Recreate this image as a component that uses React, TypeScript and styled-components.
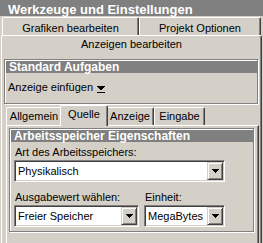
import styled, { createGlobalStyle } from 'styled-components'

const GlobalStyle = createGlobalStyle`
  html, body {
    margin: 0;
    padding: 0;
    background: #d4d0c8;
  }
  body {
    font-family: 'Liberation Sans', Arial, sans-serif;
    font-size: 11px;
    color: #000;
  }
  * {
    box-sizing: border-box;
  }
`

const Window = styled.div`
  width: 263px;
  height: 243px;
  overflow: hidden;
  background: #d4d0c8;
  display: flex;
  flex-direction: column;
`

const TitleBar = styled.div`
  height: 16px;
  margin-bottom: 1px;
  padding: 2px 0 0 8px;
  background: #808080;
  color: #fff;
  font-size: 13px;
  font-weight: bold;
  line-height: 15px;
  white-space: nowrap;
`

const TabRow = styled.div`
  display: flex;
  align-items: flex-end;
`

const Tab = styled.div<{ $width: number; $active?: boolean }>`
  position: relative;
  z-index: ${(p) => (p.$active ? 1 : 0)};
  width: ${(p) => p.$width}px;
  height: ${(p) => (p.$active ? 21 : 18)}px;
  margin: 0 ${(p) => (p.$active ? -2 : 0)}px ${(p) => (p.$active ? -1 : 0)}px;
  padding-top: 2px;
  background: #d4d0c8;
  border-top: 1px solid #fff;
  border-left: 1px solid #fff;
  border-right: 1px solid #404040;
  border-radius: 2px 2px 0 0;
  box-shadow: inset -1px 0 #808080;
  text-align: center;
  line-height: 13px;
  white-space: nowrap;
`

const BackTab = styled(Tab)`
  padding-top: 4px;
`

const BackRow = styled(TabRow)`
  padding-left: 2px;
`

const Sheet = styled.div`
  flex: 1;
  width: 261px;
  margin-left: 1px;
  display: flex;
  flex-direction: column;
  border-top: 1px solid #fff;
  border-left: 1px solid #fff;
  border-right: 1px solid #404040;
  border-radius: 2px 2px 0 0;
  box-shadow: inset -1px 0 #808080;
`

const SheetTitle = styled.div`
  height: 16px;
  padding-top: 2px;
  text-align: center;
  line-height: 13px;
`

const SheetBody = styled.div`
  flex: 1;
  display: flex;
  flex-direction: column;
  padding: 7px 0 0 2px;
`

const GroupBox = styled.div<{ $right: number }>`
  margin-right: ${(p) => p.$right}px;
  padding: 1px 0 0 1px;
  border: 1px solid #808080;
  box-shadow: inset 1px 1px #fff, 1px 1px #fff;
`

const GroupHeader = styled.div`
  height: 12px;
  padding-left: 3px;
  background: #808080;
  color: #fff;
  font-size: 12px;
  font-weight: bold;
  line-height: 12px;
  white-space: nowrap;
`

const MenuRow = styled.div`
  height: 30px;
  padding: 8px 0 0 2px;
  display: flex;
  align-items: flex-start;
  line-height: 13px;
`

const DropMark = styled.svg`
  margin: 5px 0 0 4px;
`

const TabControl = styled.div`
  flex: 1;
  margin: 1px 2px 0 2px;
  display: flex;
  flex-direction: column;
`

const TabPanel = styled.div`
  flex: 1;
  padding: 2px 0 0 2px;
  border-top: 1px solid #fff;
  border-left: 1px solid #fff;
  border-right: 1px solid #404040;
  box-shadow: inset -1px 0 #808080;
`

const Fields = styled.div`
  padding: 4px 0 4px 3px;
  display: flex;
  flex-direction: column;
`

const FieldRow = styled.div`
  margin-top: 9px;
  display: flex;
  gap: 5px;
`

const Field = styled.div<{ $width: number }>`
  width: ${(p) => p.$width}px;
  display: flex;
  flex-direction: column;
`

const Label = styled.div`
  height: 13px;
  margin-bottom: 1px;
  padding-left: 1px;
  line-height: 13px;
  white-space: nowrap;
`

const Combo = styled.div`
  height: 22px;
  padding: 1px;
  display: flex;
  background: #fff;
  border: 1px solid;
  border-color: #808080 #fff #fff #808080;
  box-shadow: inset 1px 1px #404040, inset -1px -1px #d4d0c8;
`

const ComboText = styled.div`
  flex: 1;
  padding-left: 2px;
  line-height: 18px;
  white-space: nowrap;
  overflow: hidden;
`

const ComboButton = styled.div`
  width: 16px;
  height: 18px;
  display: flex;
  align-items: center;
  justify-content: center;
  background: #d4d0c8;
  border: 1px solid;
  border-color: #d4d0c8 #404040 #404040 #d4d0c8;
  box-shadow: inset 1px 1px #fff, inset -1px -1px #808080;
`

const Arrow = () => (
  <svg width="7" height="4" viewBox="0 0 7 4">
    <path d="M0 0h7v1h-1v1h-1v1h-1v1h-1v-1h-1v-1h-1v-1h-1z" fill="#000" />
  </svg>
)

const Select = ({ value }: { value: string }) => (
  <Combo>
    <ComboText>{value}</ComboText>
    <ComboButton>
      <Arrow />
    </ComboButton>
  </Combo>
)

export default function App() {
  return (
    <>
      <GlobalStyle />
      <Window>
        <TitleBar>Werkzeuge und Einstellungen</TitleBar>
        <BackRow>
          <BackTab $width={137}>Grafiken bearbeiten</BackTab>
          <BackTab $width={122}>Projekt Optionen</BackTab>
        </BackRow>
        <Sheet>
          <SheetTitle>Anzeigen bearbeiten</SheetTitle>
          <SheetBody>
            <GroupBox $right={3}>
              <GroupHeader>Standard Aufgaben</GroupHeader>
              <MenuRow>
                Anzeige einfügen
                <DropMark width="8" height="7" viewBox="0 0 8 7">
                  <path d="M0 0h8v1h-1v1h-1v1h-1v1h-2v-1h-1v-1h-1v-1h-1z" fill="#000" />
                  <rect x="0" y="6" width="8" height="1" fill="#000" />
                </DropMark>
              </MenuRow>
            </GroupBox>
            <TabControl>
              <TabRow>
                <Tab $width={56}>Allgemein</Tab>
                <Tab $width={48} $active>
                  Quelle
                </Tab>
                <Tab $width={48}>Anzeige</Tab>
                <Tab $width={51}>Eingabe</Tab>
              </TabRow>
              <TabPanel>
                <GroupBox $right={4}>
                  <GroupHeader>Arbeitsspeicher Eigenschaften</GroupHeader>
                  <Fields>
                    <Field $width={211}>
                      <Label>Art des Arbeitsspeichers:</Label>
                      <Select value="Physikalisch" />
                    </Field>
                    <FieldRow>
                      <Field $width={125}>
                        <Label>Ausgabewert wählen:</Label>
                        <Select value="Freier Speicher" />
                      </Field>
                      <Field $width={81}>
                        <Label>Einheit:</Label>
                        <Select value="MegaBytes" />
                      </Field>
                    </FieldRow>
                  </Fields>
                </GroupBox>
              </TabPanel>
            </TabControl>
          </SheetBody>
        </Sheet>
      </Window>
    </>
  )
}
